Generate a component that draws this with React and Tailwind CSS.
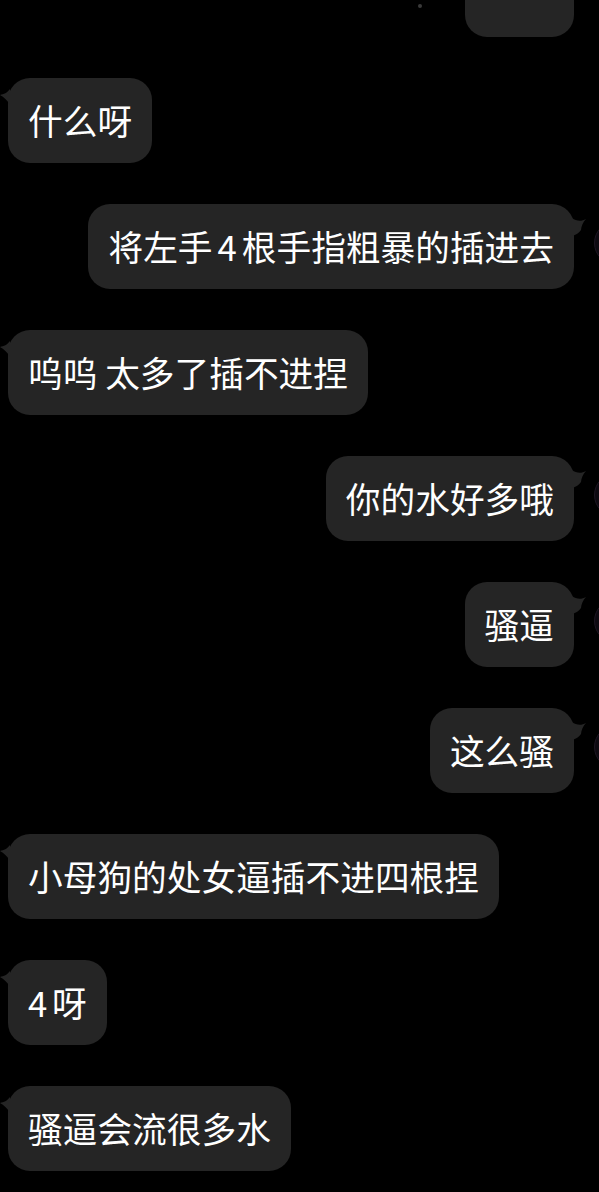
import React from 'react';

const messages = [
  { side: 'right', text: '' },
  { side: 'left', text: '什么呀' },
  { side: 'right', text: (<>将左手<span className="inline-block px-[5px]">4</span>根手指粗暴的插进去</>) },
  { side: 'left', text: '呜呜 太多了插不进捏' },
  { side: 'right', text: '你的水好多哦' },
  { side: 'right', text: '骚逼' },
  { side: 'right', text: '这么骚' },
  { side: 'left', text: '小母狗的处女逼插不进四根捏' },
  { side: 'left', text: (<><span className="inline-block w-[24px]">4</span>呀</>) },
  { side: 'left', text: '骚逼会流很多水' },
];

const LeftTail = () => (
  <svg className="absolute left-[-8px] top-[10px]" width="10" height="18" viewBox="0 0 10 18">
    <path d="M10 1 C7 5 4 6 0 7 C4 9 7 12 10 17 Z" fill="#252525" />
  </svg>
);

const RightTail = () => (
  <svg className="absolute right-[-13px] top-[12px]" width="15" height="20" viewBox="0 0 15 20">
    <path d="M0 2 C4 5 9 6 14 3 C11 6 9 11 9 14 C7 17 4 19 0 20 Z" fill="#252525" />
  </svg>
);

const Bubble = ({ side, text }) => (
  <div className={`relative h-[85px] flex ${side === 'left' ? 'justify-start pl-[8px]' : 'justify-end pr-[25px]'}`}>
    <div className={`relative h-[85px] flex items-center rounded-[22px] bg-[#252525] px-[20px] text-white text-[34.7px] leading-none whitespace-pre ${text === '' ? 'w-[109px]' : ''}`}>
      {side === 'left' ? <LeftTail /> : <RightTail />}
      {text}
    </div>
    {side === 'right' && text !== '' && (
      <div className="absolute left-[594px] top-[17px] w-[44px] h-[44px] rounded-full bg-[#0d0910] border border-[#1d1622]" />
    )}
  </div>
);

export default function App() {
  return (
    <div
      className="relative w-[599px] h-[1192px] bg-black overflow-hidden"
      style={{ fontFamily: '"Noto Sans CJK SC", "Noto Sans", sans-serif' }}
    >
      <div className="absolute left-[418px] top-[4px] w-[4px] h-[4px] rounded-full bg-[#3a3a3a]" />
      <div className="flex flex-col gap-[41px] mt-[-48px]">
        {messages.map((m, i) => (
          <Bubble key={i} side={m.side} text={m.text} />
        ))}
      </div>
    </div>
  );
}
